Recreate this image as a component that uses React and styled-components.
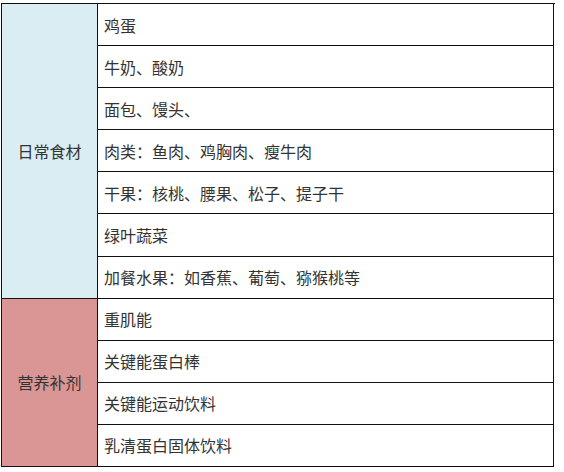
import React from 'react';
import styled, { createGlobalStyle } from 'styled-components';

const GlobalStyle = createGlobalStyle`
  body {
    margin: 0;
    background: #ffffff;
    font-family: "Noto Sans CJK SC", "Liberation Sans", sans-serif;
  }
`;

const Page = styled.div`
  padding: 3px 0 0 1px;
`;

const Table = styled.div`
  display: grid;
  grid-template-columns: 96px 456px;
  grid-template-rows: repeat(11, 1fr);
  height: 464px;
  width: 554px;
  box-sizing: border-box;
  border-top: 1.5px solid #111;
  border-left: 1.5px solid #111;
`;

const GroupCell = styled.div`
  grid-row: span ${props => props.$span};
  background-color: ${props => props.$color};
  border-right: 1.5px solid #111;
  border-bottom: 1.5px solid #111;
  display: flex;
  align-items: center;
  justify-content: center;
  font-size: 16px;
  color: #333;
`;

const ItemCell = styled.div`
  grid-column: 2;
  border-right: 1.5px solid #111;
  border-bottom: 1.5px solid #111;
  display: flex;
  align-items: center;
  padding-left: 6px;
  font-size: 16px;
  color: #333;
  background: #fff;
`;

const groups = [
  {
    name: '日常食材',
    color: '#daedf3',
    items: [
      '鸡蛋',
      '牛奶、酸奶',
      '面包、馒头、',
      '肉类：鱼肉、鸡胸肉、瘦牛肉',
      '干果：核桃、腰果、松子、提子干',
      '绿叶蔬菜',
      '加餐水果：如香蕉、葡萄、猕猴桃等',
    ],
  },
  {
    name: '营养补剂',
    color: '#d99694',
    items: ['重肌能', '关键能蛋白棒', '关键能运动饮料', '乳清蛋白固体饮料'],
  },
];

export default function App() {
  return (
    <>
      <GlobalStyle />
      <Page>
        <Table>
          {groups.map(group => (
            <React.Fragment key={group.name}>
              <GroupCell $span={group.items.length} $color={group.color}>
                {group.name}
              </GroupCell>
              {group.items.map(item => (
                <ItemCell key={item}>{item}</ItemCell>
              ))}
            </React.Fragment>
          ))}
        </Table>
      </Page>
    </>
  );
}
